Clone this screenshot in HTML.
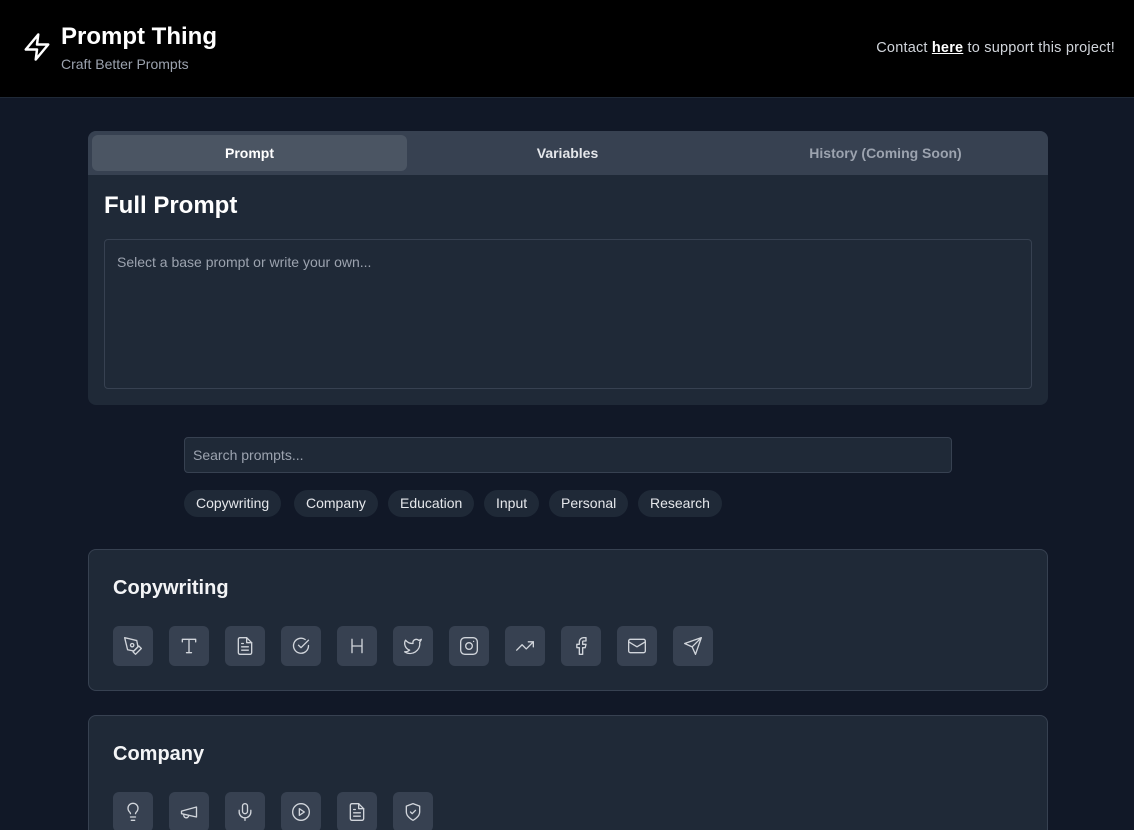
<!DOCTYPE html>
<html><head><meta charset="utf-8"><style>
*{box-sizing:border-box;margin:0;padding:0}
html,body{width:1134px;height:830px;overflow:hidden}
body{background:#111827;font-family:"Liberation Sans",sans-serif;color:#f3f4f6;position:relative}
.hdr{position:absolute;left:0;top:0;width:1134px;height:98px;background:#000;border-bottom:1px solid #1f2937}
.abs{position:absolute}
.panel{position:absolute;left:88px;top:131px;width:960px;height:274px;background:#1f2937;border-radius:8px}
.tabs{position:absolute;left:0;top:0;width:960px;height:44px;background:#374151;border-radius:8px 8px 0 0}
.tab{position:absolute;top:4px;height:36px;width:315px;line-height:36px;text-align:center;font-size:14px;font-weight:bold}
.ta{position:absolute;left:16px;top:108px;width:928px;height:150px;border:1px solid #374151;border-radius:4px;background:#1f2937;color:#9ca3af;font-size:14px;padding:14px 12px}
.search{position:absolute;left:184px;top:437px;width:768px;height:36px;background:#1f2937;border:1px solid #374151;border-radius:4px;color:#9ca3af;font-size:14px;padding:9px 8px}
.chip{position:absolute;top:490px;height:27px;line-height:27px;padding:0 12px;background:#1f2937;border-radius:14px;font-size:14px;color:#e5e7eb}
.card{position:absolute;left:88px;width:960px;background:#1f2937;border:1px solid #374151;border-radius:8px}
.card h2{position:absolute;left:24px;top:27px;font-size:20px;font-weight:bold}
.ib{position:absolute;width:40px;height:40px;background:#374151;border-radius:6px;display:flex;align-items:center;justify-content:center}
.ib svg{width:20px;height:20px;fill:none;stroke:#d1d5db;stroke-width:1.6;stroke-linecap:round;stroke-linejoin:round}
</style></head><body>
<div class="hdr">
<svg class="abs" style="left:22px;top:32px" width="30" height="30" viewBox="0 0 24 24" fill="none" stroke="#fff" stroke-width="2" stroke-linejoin="round"><path d="M13 2L3 14h9l-1 8 10-12h-9l1-8z"/></svg>
<div class="abs" style="left:61px;top:23px;font-size:24px;font-weight:bold;color:#fff">Prompt Thing</div>
<div class="abs" style="left:61px;top:56px;font-size:14px;color:#9ca3af">Craft Better Prompts</div>
<div class="abs" style="right:19px;top:40px;font-size:14.5px;color:#d1d5db;letter-spacing:0.2px">Contact <u style="color:#fff;font-weight:bold">here</u> to support this project!</div>
</div>
<div class="panel">
<div class="tabs">
<div class="tab" style="left:4px;background:#4b5563;border-radius:6px;color:#fff">Prompt</div>
<div class="tab" style="left:322px;color:#e5e7eb">Variables</div>
<div class="tab" style="left:640px;color:#9ca3af">History (Coming Soon)</div>
</div>
<div class="abs" style="left:16px;top:61px;font-size:24px;font-weight:bold;color:#fff">Full Prompt</div>
<div class="ta">Select a base prompt or write your own...</div>
</div>
<div class="search">Search prompts...</div>
<div class="chip" style="left:184px">Copywriting</div>
<div class="chip" style="left:294px">Company</div>
<div class="chip" style="left:388px">Education</div>
<div class="chip" style="left:484px">Input</div>
<div class="chip" style="left:549px">Personal</div>
<div class="chip" style="left:638px">Research</div>

<div class="card" style="top:549px;height:142px"><h2>Copywriting</h2></div>
<div class="card" style="top:715px;height:140px"><h2>Company</h2></div>

<div class="ib" style="left:113px;top:626px"><svg viewBox="0 0 24 24"><path d="M12 19l7-7 3 3-7 7-3-3z"/><path d="M18 13l-1.5-7.5L2 2l3.5 14.5L13 18l5-5z"/><circle cx="11" cy="11" r="2"/></svg></div>
<div class="ib" style="left:169px;top:626px"><svg viewBox="0 0 24 24"><path d="M4 7V4h16v3M9 20h6M12 4v16"/></svg></div>
<div class="ib" style="left:225px;top:626px"><svg viewBox="0 0 24 24"><path d="M14 2H6a2 2 0 0 0-2 2v16a2 2 0 0 0 2 2h12a2 2 0 0 0 2-2V8z"/><path d="M14 2v6h6M16 13H8M16 17H8M10 9H8"/></svg></div>
<div class="ib" style="left:281px;top:626px"><svg viewBox="0 0 24 24"><path d="M21 11.5a9 9 0 1 1-4-7.3"/><path d="M9 11l3 3L21 5"/></svg></div>
<div class="ib" style="left:337px;top:626px"><svg viewBox="0 0 24 24"><path d="M6 4v16M18 4v16M6 12h12"/></svg></div>
<div class="ib" style="left:393px;top:626px"><svg viewBox="0 0 24 24"><path d="M22 4s-.7 2.1-2 3.4c1.6 10-9.4 17.3-18 11.6 2.2.1 4.4-.6 6-2C3 15.5.5 9.6 3 5c2.2 2.6 5.6 4.1 9 4-.9-4.2 4-6.6 7-3.8 1.1 0 3-1.2 3-1.2z"/></svg></div>
<div class="ib" style="left:449px;top:626px"><svg viewBox="0 0 24 24"><rect x="2" y="2" width="20" height="20" rx="5"/><circle cx="12" cy="12" r="4"/><path d="M17.5 6.5h.01"/></svg></div>
<div class="ib" style="left:505px;top:626px"><svg viewBox="0 0 24 24"><path d="M22 7l-8.5 8.5-5-5L2 17"/><path d="M16 7h6v6"/></svg></div>
<div class="ib" style="left:561px;top:626px"><svg viewBox="0 0 24 24"><path d="M18 2h-3a5 5 0 0 0-5 5v3H7v4h3v8h4v-8h3l1-4h-4V7a1 1 0 0 1 1-1h3z"/></svg></div>
<div class="ib" style="left:617px;top:626px"><svg viewBox="0 0 24 24"><rect x="2" y="4" width="20" height="16" rx="2"/><path d="M22 7l-10 6L2 7"/></svg></div>
<div class="ib" style="left:673px;top:626px"><svg viewBox="0 0 24 24"><path d="M22 2L11 13M22 2l-7 20-4-9-9-4 20-7z"/></svg></div>

<div class="ib" style="left:113px;top:792px"><svg viewBox="0 0 24 24"><path d="M15 14c.2-1 .7-1.7 1.5-2.5A6 6 0 1 0 7.5 11.5c.8.8 1.3 1.5 1.5 2.5M9 18h6M10 22h4"/></svg></div>
<div class="ib" style="left:169px;top:792px"><svg viewBox="0 0 24 24"><path d="M3 11l18-5v12L3 14v-3z"/><path d="M11.6 16.8a3 3 0 1 1-5.8-1.6"/></svg></div>
<div class="ib" style="left:225px;top:792px"><svg viewBox="0 0 24 24"><rect x="9" y="2" width="6" height="12" rx="3"/><path d="M19 10v2a7 7 0 0 1-14 0v-2M12 19v3"/></svg></div>
<div class="ib" style="left:281px;top:792px"><svg viewBox="0 0 24 24"><circle cx="12" cy="12" r="10"/><path d="M10 8l6 4-6 4V8z"/></svg></div>
<div class="ib" style="left:337px;top:792px"><svg viewBox="0 0 24 24"><path d="M14 2H6a2 2 0 0 0-2 2v16a2 2 0 0 0 2 2h12a2 2 0 0 0 2-2V8z"/><path d="M14 2v6h6M16 13H8M16 17H8M10 9H8"/></svg></div>
<div class="ib" style="left:393px;top:792px"><svg viewBox="0 0 24 24"><path d="M12 22s8-4 8-10V5l-8-3-8 3v7c0 6 8 10 8 10z"/><path d="M9 12l2 2 4-4"/></svg></div>
</body></html>
